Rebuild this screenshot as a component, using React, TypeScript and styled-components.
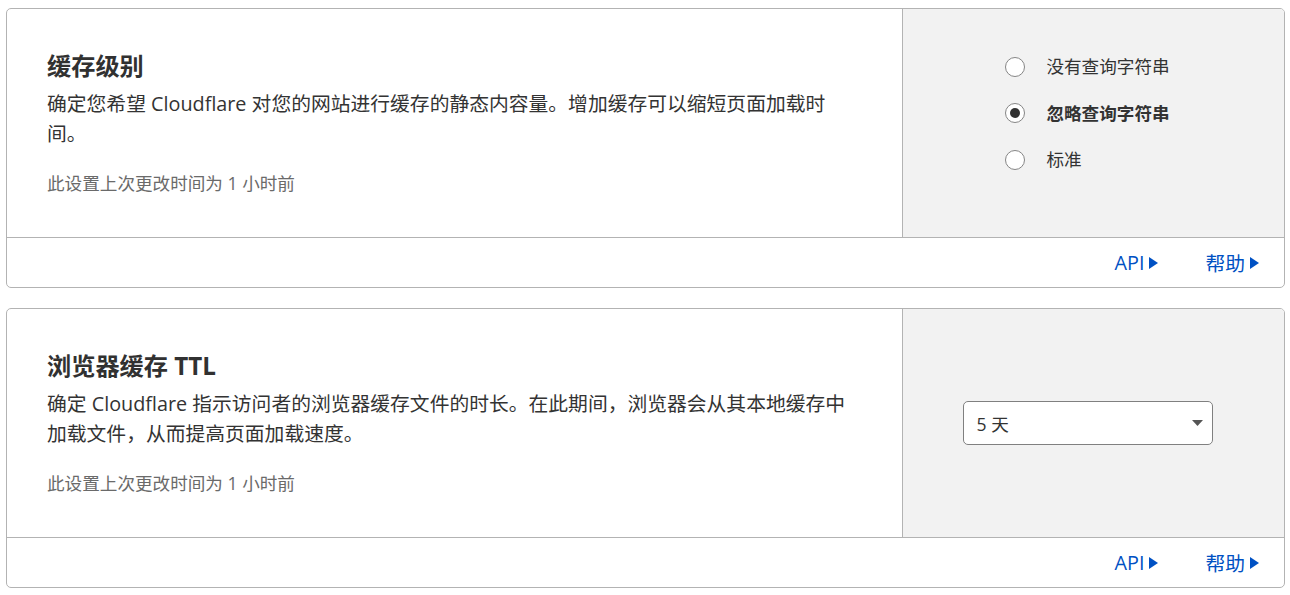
import React, { useState } from "react";
import styled, { createGlobalStyle } from "styled-components";

const GlobalStyle = createGlobalStyle`
  body {
    margin: 0;
    background: #ffffff;
    font-family: "Open Sans", "Noto Sans CJK SC", sans-serif;
    color: #333333;
  }
`;

const Page = styled.div`
  display: flex;
  flex-direction: column;
  gap: 20px;
  padding: 8px 5px 8px 6px;
`;

const Card = styled.section`
  border: 1px solid #b3b3b3;
  border-radius: 5px;
  background: #ffffff;
  overflow: hidden;
`;

const CardMain = styled.div`
  display: grid;
  grid-template-columns: 895px 1fr;
  height: 228px;
`;

const Info = styled.div`
  display: flex;
  flex-direction: column;
  justify-content: center;
  padding: 0 40px 2px;
`;

const Title = styled.h3`
  margin: 0 0 7px;
  font-size: 24.2px;
  line-height: 32px;
  font-weight: 700;
  color: #313131;
`;

const Description = styled.p`
  margin: 0;
  max-width: 808px;
  font-size: 19.8px;
  line-height: 30px;
  color: #333333;
`;

const Modified = styled.p`
  margin: 22px 0 0;
  font-size: 17.6px;
  line-height: 24px;
  color: #6a6a6a;
`;

const Control = styled.div`
  display: flex;
  align-items: center;
  justify-content: center;
  padding: 0 32px 0 20px;
  background: #f2f2f2;
  border-left: 1px solid #b3b3b3;
`;

const RadioGroup = styled.div`
  display: flex;
  flex-direction: column;
`;

const RadioRow = styled.label`
  display: flex;
  align-items: center;
  gap: 21px;
  margin-bottom: 20px;
  font-size: 17.6px;
  line-height: 26.5px;
  cursor: pointer;
`;

const RadioCircle = styled.span<{ $checked: boolean }>`
  position: relative;
  width: 20px;
  height: 20px;
  box-sizing: border-box;
  border: 1px solid #858585;
  border-radius: 50%;
  background: #ffffff;

  &::after {
    content: "";
    display: ${({ $checked }) => ($checked ? "block" : "none")};
    position: absolute;
    top: 4px;
    left: 4px;
    width: 10px;
    height: 10px;
    border-radius: 50%;
    background: #313131;
  }
`;

const RadioLabel = styled.span<{ $checked: boolean }>`
  font-weight: ${({ $checked }) => ($checked ? 700 : 400)};
  color: #333333;
`;

const SelectBox = styled.div`
  display: flex;
  align-items: center;
  justify-content: space-between;
  width: 250px;
  height: 44px;
  box-sizing: border-box;
  padding: 0 9px 0 13px;
  border: 1px solid #808080;
  border-radius: 5px;
  background: #ffffff;
  font-size: 17.6px;
  color: #333333;
`;

const Footer = styled.div`
  display: flex;
  justify-content: flex-end;
  align-items: center;
  gap: 47px;
  height: 49px;
  padding-right: 25px;
  border-top: 1px solid #b3b3b3;
`;

const FooterLink = styled.a`
  display: flex;
  align-items: center;
  gap: 5px;
  font-size: 19.8px;
  color: #0051c3;
  text-decoration: none;
  cursor: pointer;
`;

const Caret = () => (
  <svg width="9" height="12" viewBox="0 0 9 12">
    <path d="M0 0 L9 6 L0 12 Z" fill="#0051c3" />
  </svg>
);

const DownCaret = () => (
  <svg width="11" height="6" viewBox="0 0 11 6">
    <path d="M0 0 H11 L5.5 6 Z" fill="#555555" />
  </svg>
);

const CardFooter = () => (
  <Footer>
    <FooterLink>
      API
      <Caret />
    </FooterLink>
    <FooterLink>
      帮助
      <Caret />
    </FooterLink>
  </Footer>
);

const cacheLevels = ["没有查询字符串", "忽略查询字符串", "标准"];

export default function App() {
  const [level, setLevel] = useState(1);

  return (
    <>
      <GlobalStyle />
      <Page>
        <Card>
          <CardMain>
            <Info>
              <Title>缓存级别</Title>
              <Description>
                确定您希望 Cloudflare 对您的网站进行缓存的静态内容量。增加缓存可以缩短页面加载时间。
              </Description>
              <Modified>此设置上次更改时间为 1 小时前</Modified>
            </Info>
            <Control>
              <RadioGroup>
                {cacheLevels.map((name, i) => (
                  <RadioRow key={name} onClick={() => setLevel(i)}>
                    <RadioCircle $checked={level === i} />
                    <RadioLabel $checked={level === i}>{name}</RadioLabel>
                  </RadioRow>
                ))}
              </RadioGroup>
            </Control>
          </CardMain>
          <CardFooter />
        </Card>

        <Card>
          <CardMain>
            <Info>
              <Title>浏览器缓存 TTL</Title>
              <Description>
                确定 Cloudflare 指示访问者的浏览器缓存文件的时长。在此期间，浏览器会从其本地缓存中加载文件，从而提高页面加载速度。
              </Description>
              <Modified>此设置上次更改时间为 1 小时前</Modified>
            </Info>
            <Control>
              <SelectBox>
                <span>5 天</span>
                <DownCaret />
              </SelectBox>
            </Control>
          </CardMain>
          <CardFooter />
        </Card>
      </Page>
    </>
  );
}
